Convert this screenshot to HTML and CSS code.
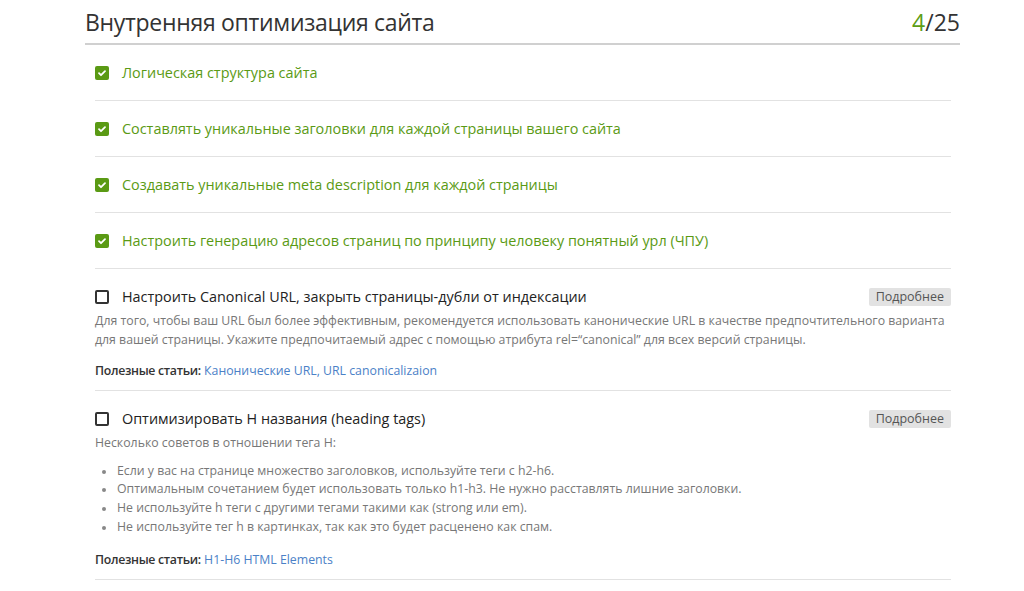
FILE: index.html
```html
<!DOCTYPE html>
<html lang="ru">
<head>
<meta charset="utf-8">
<title>Внутренняя оптимизация сайта</title>
<link rel="stylesheet" href="styles.css">
</head>
<body>
<div class="section">
  <div class="header">
    <h1 class="title">Внутренняя оптимизация сайта</h1>
    <div class="count"><span class="done">4</span>/25</div>
  </div>
  <ul class="tasks">
    <li class="task checked">
      <div class="task-head">
        <span class="box"><svg viewBox="0 0 14 14" width="14" height="14"><path d="M4 7.2l2 2 4-4" fill="none" stroke="#fff" stroke-width="1.8" stroke-linecap="round" stroke-linejoin="round"/></svg></span>
        <span class="task-title">Логическая структура сайта</span>
      </div>
    </li>
    <li class="task checked">
      <div class="task-head">
        <span class="box"><svg viewBox="0 0 14 14" width="14" height="14"><path d="M4 7.2l2 2 4-4" fill="none" stroke="#fff" stroke-width="1.8" stroke-linecap="round" stroke-linejoin="round"/></svg></span>
        <span class="task-title">Составлять уникальные заголовки для каждой страницы вашего сайта</span>
      </div>
    </li>
    <li class="task checked">
      <div class="task-head">
        <span class="box"><svg viewBox="0 0 14 14" width="14" height="14"><path d="M4 7.2l2 2 4-4" fill="none" stroke="#fff" stroke-width="1.8" stroke-linecap="round" stroke-linejoin="round"/></svg></span>
        <span class="task-title">Создавать уникальные meta description для каждой страницы</span>
      </div>
    </li>
    <li class="task checked">
      <div class="task-head">
        <span class="box"><svg viewBox="0 0 14 14" width="14" height="14"><path d="M4 7.2l2 2 4-4" fill="none" stroke="#fff" stroke-width="1.8" stroke-linecap="round" stroke-linejoin="round"/></svg></span>
        <span class="task-title">Настроить генерацию адресов страниц по принципу человеку понятный урл (ЧПУ)</span>
      </div>
    </li>
    <li class="task open">
      <div class="task-head">
        <span class="box"></span>
        <span class="task-title">Настроить Canonical URL, закрыть страницы-дубли от индексации</span>
        <span class="more">Подробнее</span>
      </div>
      <p class="desc">Для того, чтобы ваш URL был более эффективным, рекомендуется использовать канонические URL в качестве предпочтительного варианта для вашей страницы. Укажите предпочитаемый адрес с помощью атрибута rel=“canonical” для всех версий страницы.</p>
      <p class="links"><span class="links-label">Полезные статьи:</span> <a href="#">Канонические URL, URL canonicalizaion</a></p>
    </li>
    <li class="task open">
      <div class="task-head">
        <span class="box"></span>
        <span class="task-title">Оптимизировать H названия (heading tags)</span>
        <span class="more">Подробнее</span>
      </div>
      <p class="desc">Несколько советов в отношении тега H:</p>
      <ul class="tips">
        <li>Если у вас на странице множество заголовков, используйте теги с h2-h6.</li>
        <li>Оптимальным сочетанием будет использовать только h1-h3. Не нужно расставлять лишние заголовки.</li>
        <li>Не используйте h теги с другими тегами такими как (strong или em).</li>
        <li>Не используйте тег h в картинках, так как это будет расценено как спам.</li>
      </ul>
      <p class="links links-after-list"><span class="links-label">Полезные статьи:</span> <a href="#">H1-H6 HTML Elements</a></p>
    </li>
  </ul>
</div>
</body>
</html>
```
FILE: styles.css
```css
html, body {
  margin: 0;
  padding: 0;
  background: #fff;
}
body {
  font-family: "Open Sans", "Noto Sans", sans-serif;
  color: #333;
}
.section {
  margin-left: 85px;
  width: 875px;
}
.header {
  display: flex;
  justify-content: space-between;
  align-items: flex-end;
  height: 43px;
  border-bottom: 2px solid #d0d0d0;
}
.title {
  margin: 0 0 5px 0;
  font-size: 23px;
  font-weight: 400;
  letter-spacing: -0.3px;
  color: #333;
  line-height: 32px;
}
.count {
  font-size: 23px;
  line-height: 32px;
  margin-bottom: 5px;
  color: #333;
}
.count .done {
  color: #5d9d16;
}
.tasks {
  list-style: none;
  margin: 0 9px 0 10px;
  padding: 0;
}
.task {
  border-bottom: 1px solid #e2e2e2;
}
.task.checked {
  height: 55px;
  display: flex;
  align-items: center;
}
.task-head {
  display: flex;
  align-items: center;
  width: 100%;
}
.box {
  width: 14px;
  height: 14px;
  box-sizing: border-box;
  border-radius: 2px;
  flex: none;
  margin-right: 13px;
  display: block;
}
.box svg {
  display: block;
}
.checked .box {
  background: #5a9a14;
  margin-top: 1px;
}
.open .box {
  border: 2px solid #333;
  width: 14px;
  height: 14px;
}
.task-title {
  font-size: 14.4px;
  font-weight: 500;
}
.checked .task-title {
  color: #5a9a14;
}
.open .task-title {
  color: #222;
  flex: 1;
}
.open {
  padding: 18px 0 10px 0;
}
.more {
  background: #e2e2e2;
  color: #555;
  font-size: 12.5px;
  line-height: 18px;
  padding: 0 7px;
  border-radius: 2px;
}
.desc {
  margin: 6px 0 0;
  font-size: 12.3px;
  line-height: 18.5px;
  color: #777;
}
.tips {
  list-style: none;
  margin: 9px 0 0;
  padding-left: 22px;
  font-size: 12.3px;
  line-height: 18.7px;
  color: #777;
}
.tips li {
  position: relative;
}
.tips li::before {
  content: "";
  position: absolute;
  left: -15px;
  top: 8px;
  width: 4px;
  height: 4px;
  border-radius: 50%;
  background: #888;
}
.links {
  margin: 13px 0 0;
  font-size: 12.3px;
  line-height: 18px;
}
.links-after-list {
  margin-top: 15px;
}
.links-label {
  color: #333;
  font-weight: 600;
  letter-spacing: -0.3px;
}
.links a {
  color: #4b81c7;
  text-decoration: none;
}
```
